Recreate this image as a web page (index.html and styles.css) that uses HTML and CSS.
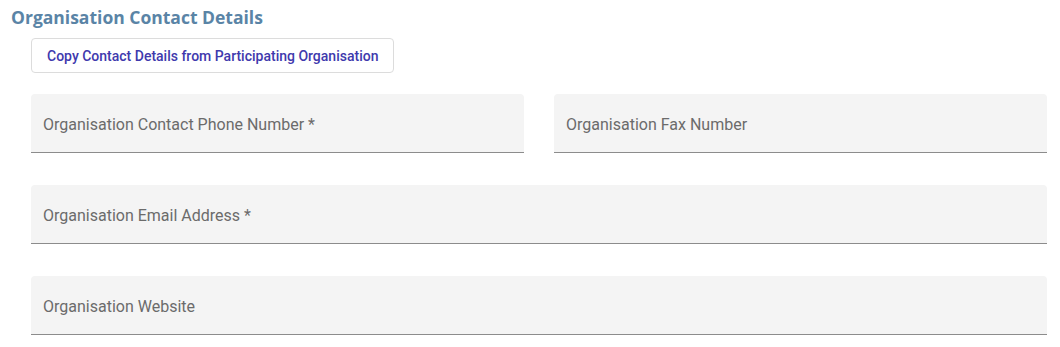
FILE: index.html
```html
<!DOCTYPE html>
<html lang="en">
<head>
<meta charset="utf-8">
<title>Organisation Contact Details</title>
<link rel="stylesheet" href="styles.css">
</head>
<body>
<section class="section">
  <h2 class="section-title">Organisation Contact Details</h2>
  <div class="content">
    <button type="button" class="copy-btn">Copy Contact Details from Participating Organisation</button>
    <div class="row two">
      <div class="field"><span class="label">Organisation Contact Phone Number *</span></div>
      <div class="field"><span class="label">Organisation Fax Number</span></div>
    </div>
    <div class="row">
      <div class="field"><span class="label">Organisation Email Address *</span></div>
    </div>
    <div class="row">
      <div class="field"><span class="label">Organisation Website</span></div>
    </div>
  </div>
</section>
</body>
</html>
```

FILE: styles.css
```css
html, body {
  margin: 0;
  padding: 0;
  background: #ffffff;
}
body {
  font-family: Roboto, "Liberation Sans", sans-serif;
}
.section {
  padding: 5px 13px 0 11px;
}
.section-title {
  margin: 0;
  font-family: "Open Sans", "Liberation Sans", sans-serif;
  font-weight: 700;
  font-size: 17.5px;
  line-height: 24px;
  color: #5a84a6;
}
.content {
  padding: 9px 0 0 20px;
  display: flex;
  flex-direction: column;
  align-items: flex-start;
}
.copy-btn {
  height: 35px;
  padding: 0 15px;
  background: #ffffff;
  border: 1px solid #dcdcdc;
  border-radius: 4px;
  font-family: Roboto, "Liberation Sans", sans-serif;
  font-size: 14px;
  font-weight: 500;
  color: #4039ad;
  cursor: pointer;
}
.row {
  align-self: stretch;
  display: grid;
  grid-template-columns: 1fr;
  margin-top: 21px;
}
.row + .row {
  margin-top: 32px;
}
.row.two {
  grid-template-columns: 1fr 1fr;
  column-gap: 30px;
}
.field {
  box-sizing: content-box;
  height: 56px;
  padding: 2px 12px 0;
  background: #f4f4f4;
  border-bottom: 1px solid #8c8c8c;
  border-radius: 4px 4px 0 0;
  display: flex;
  align-items: center;
}
.label {
  font-size: 16px;
  color: #6b6b6b;
}
```
